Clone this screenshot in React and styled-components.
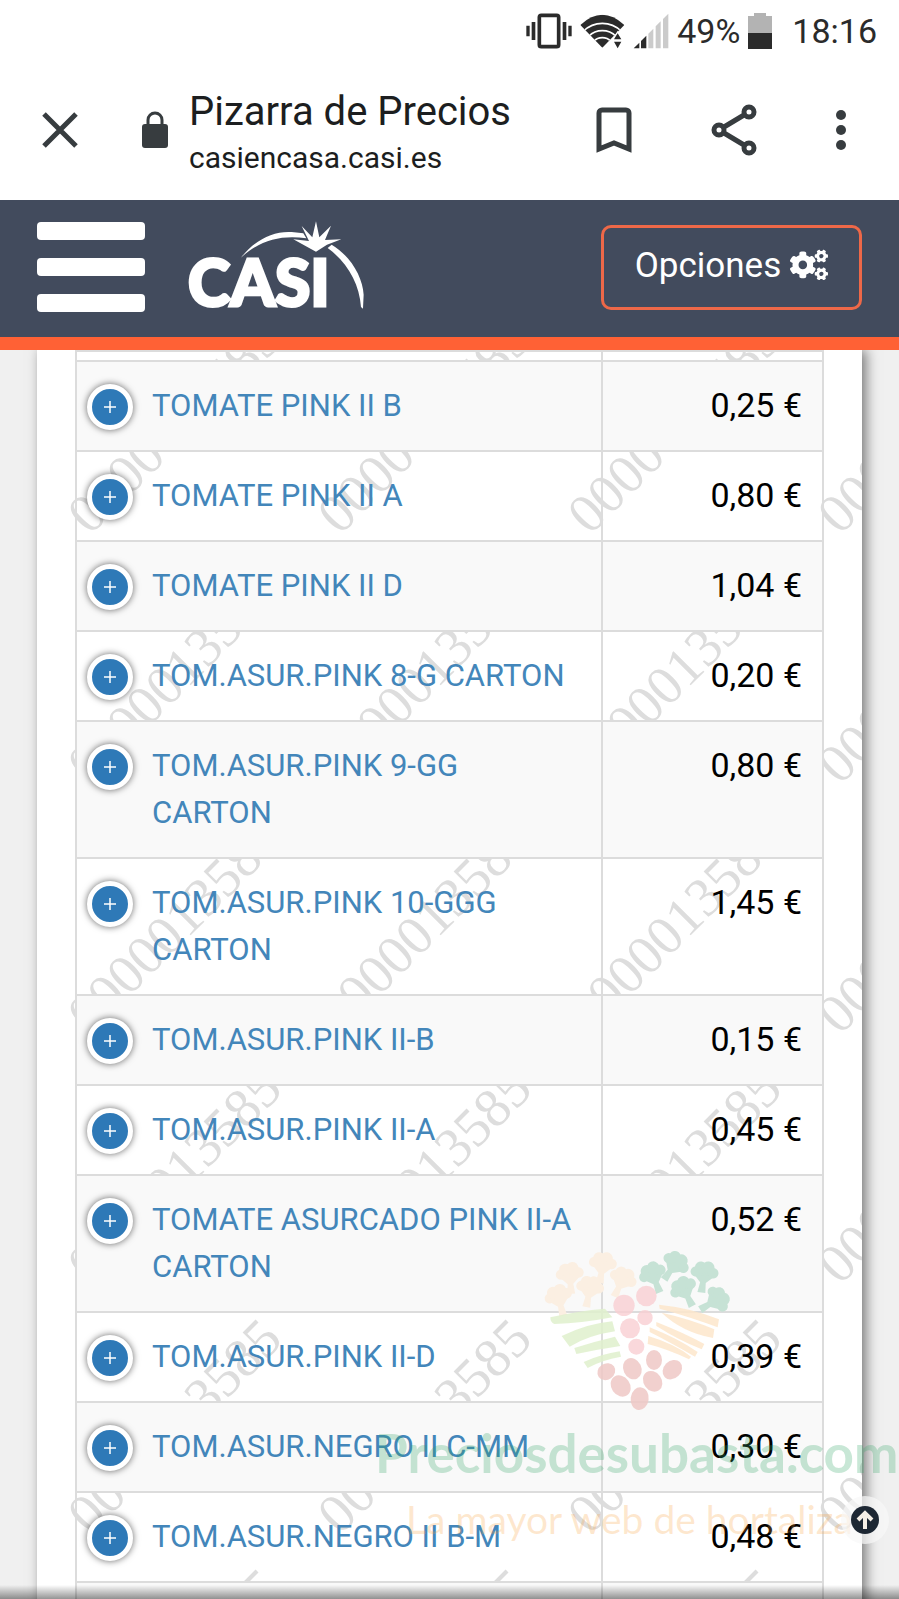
import React from 'react';
import styled, { createGlobalStyle } from 'styled-components';
import { FaCogs } from 'react-icons/fa';

const GlobalStyle = createGlobalStyle`
  *, *::before, *::after {
    box-sizing: border-box;
  }
  body {
    margin: 0;
    background-color: #f0f0f0;
    font-family: Roboto, 'Liberation Sans', sans-serif;
    color: #000;
  }
`;

const Page = styled.div`
  position: relative;
  display: flex;
  flex-direction: column;
  height: 100vh;
  overflow: hidden;
`;

const StatusBar = styled.div`
  display: flex;
  justify-content: flex-end;
  align-items: center;
  height: 62px;
  padding: 0 22px;
  background-color: white;
  color: #2b2b2b;
  font-size: 34px;
  svg {
    display: block;
  }
`;
const StatusIcons = styled.div`
  display: flex;
  align-items: center;
  gap: 8px;
  margin-right: 20px;
`;

const BrowserBar = styled.div`
  display: flex;
  align-items: center;
  height: 138px;
  padding: 0 47px 2px 36px;
  background-color: white;
  color: #373c3f;
`;
const PlainButton = styled.button`
  display: flex;
  justify-content: center;
  align-items: center;
  width: ${props => (props.$narrow ? '22px' : '48px')};
  height: 60px;
  padding: 0;
  border: none;
  background: none;
  color: inherit;
  cursor: pointer;
`;
const LockHolder = styled.div`
  width: 28px;
  height: 38px;
  margin-left: 57px;
  svg {
    display: block;
  }
`;
const Address = styled.div`
  flex: 1;
  margin-left: 20px;
  padding-top: 8px;
  color: #1c1e20;
`;
const PageTitle = styled.div`
  font-size: 40px;
  line-height: 48px;
  white-space: nowrap;
`;
const PageUrl = styled.div`
  font-size: 30px;
  line-height: 44px;
`;
const Actions = styled.div`
  display: flex;
  gap: 72px;
`;

const NavBar = styled.header`
  display: flex;
  align-items: center;
  height: 150px;
  flex-shrink: 0;
  padding: 0 37px 3px;
  background-color: #424b5d;
  border-bottom: 13px solid #ff6135;
`;
const MenuButton = styled.button`
  display: flex;
  flex-direction: column;
  gap: 18px;
  width: 108px;
  padding: 0;
  border: none;
  background: none;
  cursor: pointer;
`;
const Bar = styled.span`
  height: 18px;
  border-radius: 4px;
  background-color: white;
`;
const Logo = styled.a`
  margin-left: 35px;
  margin-right: auto;
  svg {
    display: block;
  }
`;
const OptionsButton = styled.button`
  display: flex;
  align-items: center;
  justify-content: center;
  gap: 9px;
  width: 261px;
  height: 85px;
  padding: 0 0 4px;
  border: 3px solid #ee6848;
  border-radius: 10px;
  background: none;
  color: white;
  font-family: inherit;
  font-size: 35px;
  cursor: pointer;
`;

const Main = styled.main`
  position: relative;
  flex: 1;
  min-height: 0;
  overflow: hidden;
  padding: 0 37px;
  &::after {
    content: '';
    position: absolute;
    left: 0;
    right: 0;
    bottom: 0;
    height: 14px;
    background: linear-gradient(rgba(0, 0, 0, 0), rgba(0, 0, 0, 0.42));
  }
`;
const Panel = styled.section`
  position: relative;
  min-height: 100%;
  padding: 0 38px;
  background-color: white;
  box-shadow: 4px 0 12px rgba(0, 0, 0, 0.5);
`;
const Watermark = styled.svg`
  position: absolute;
  left: 0;
  top: 0;
  width: 100%;
  height: 100%;
`;

const Table = styled.table`
  position: relative;
  width: 100%;
  border-collapse: collapse;
`;
const Row = styled.tr`
  background-color: ${props => (props.$striped ? '#f9f9f9' : 'transparent')};
`;
const Cell = styled.td`
  padding: 20px 20px 21px 10px;
  border: 2px solid #dcdcdc;
  vertical-align: top;
  line-height: 47px;
`;
const PriceCell = styled(Cell)`
  width: 221px;
  text-align: right;
  font-size: 34px;
`;
const CutCell = styled.td`
  height: ${props => props.$height};
  padding: 0;
  border: 2px solid #dcdcdc;
`;
const Product = styled.div`
  display: flex;
  align-items: flex-start;
  gap: 19px;
`;
const ProductLink = styled.a`
  color: #4386ba;
  font-size: 31px;
  text-decoration: none;
`;
const ExpandButton = styled.button`
  flex-shrink: 0;
  display: flex;
  justify-content: center;
  align-items: center;
  width: 46px;
  height: 46px;
  margin: 2px 0 -2px;
  padding: 0;
  border: 5px solid white;
  border-radius: 50%;
  background-color: #2e79b7;
  box-shadow: 0 0 7px rgba(0, 0, 0, 0.6);
  cursor: pointer;
`;

const TopLink = styled.a`
  position: absolute;
  right: 10px;
  bottom: 55px;
  display: flex;
  justify-content: center;
  align-items: center;
  width: 48px;
  height: 48px;
  border-radius: 50%;
  background-color: rgba(248, 248, 248, 0.7);
`;

const Sponsor = styled.div`
  position: absolute;
  right: 0;
  bottom: 47px;
  width: 524px;
  overflow: hidden;
  font-family: Lato, sans-serif;
  line-height: 66px;
  white-space: nowrap;
  pointer-events: none;
  svg {
    display: block;
    margin-left: 160px;
  }
`;
const SponsorName = styled.div`
  color: rgba(50, 165, 105, 0.27);
  font-size: 53px;
  font-weight: 700;
`;
const SponsorLine = styled.div`
  padding-left: 31px;
  color: rgba(250, 160, 60, 0.25);
  font-size: 39px;
`;

const products = [
  ['TOMATE PINK II B', '0,25 €'],
  ['TOMATE PINK II A', '0,80 €'],
  ['TOMATE PINK II D', '1,04 €'],
  ['TOM.ASUR.PINK 8-G CARTON', '0,20 €'],
  ['TOM.ASUR.PINK 9-GG CARTON', '0,80 €'],
  ['TOM.ASUR.PINK 10-GGG CARTON', '1,45 €'],
  ['TOM.ASUR.PINK II-B', '0,15 €'],
  ['TOM.ASUR.PINK II-A', '0,45 €'],
  ['TOMATE ASURCADO PINK II-A CARTON', '0,52 €'],
  ['TOM.ASUR.PINK II-D', '0,39 €'],
  ['TOM.ASUR.NEGRO II C-MM', '0,30 €'],
  ['TOM.ASUR.NEGRO II B-M', '0,48 €'],
];

const VibrateIcon = () => (
  <svg width="46" height="36" viewBox="0 0 138 108" fill="#2b2b2b">
    <rect x="40" y="7" width="58" height="94" rx="6" fill="none" stroke="#2b2b2b" strokeWidth="11" />
    <path d="M1 38h10v32H1zM17 27h11v54H17zM110 27h11v54h-11zM127 38h10v32h-10z" />
  </svg>
);

const WifiIcon = () => (
  <svg width="45" height="35" viewBox="0 0 135 105">
    <defs>
      <clipPath id="fan">
        <path d="M67 101 L1 33 Q67 -28 133 33 Z" />
      </clipPath>
    </defs>
    <g clipPath="url(#fan)">
      <rect width="135" height="105" fill="#2b2b2b" />
      <g fill="none" stroke="white" strokeWidth="5">
        <circle cx="67" cy="108" r="80" />
        <circle cx="67" cy="108" r="58" />
        <circle cx="67" cy="108" r="37" />
      </g>
    </g>
    <path d="M113 50 L130 79 L113 108 L96 79 Z" fill="white" />
    <path d="M113 58 L124 76 H102 Z M113 103 L102 83 H124 Z" fill="#2b2b2b" />
  </svg>
);

const SignalIcon = () => (
  <svg width="36" height="36" viewBox="0 0 108 108">
    <path d="M2 106 L19 89 V106 Z M24 84 L40 68 V106 H24 Z" fill="#2b2b2b" />
    <path d="M46 62 L61 47 V106 H46 Z M68 40 L83 25 V106 H68 Z M90 18 L106 2 V106 H90 Z" fill="#cbcbcb" />
  </svg>
);

const BatteryIcon = () => (
  <svg width="24" height="36" viewBox="0 0 24 36">
    <path d="M6 0h12v3h6v17H0V3h6z" fill="#b3b3b3" />
    <path d="M0 20h24v16H0z" fill="#2b2b2b" />
  </svg>
);

const CloseIcon = () => (
  <svg width="36" height="36" viewBox="0 0 36 36" stroke="currentColor" strokeWidth="5">
    <path d="M2 2 L34 34 M34 2 L2 34" />
  </svg>
);

const LockIcon = () => (
  <svg width="28" height="38" viewBox="0 0 28 38">
    <rect x="1" y="13" width="26" height="24" rx="3" fill="#373c3f" />
    <path d="M7 14 V9 a7 7 0 0 1 14 0 V14" fill="none" stroke="#373c3f" strokeWidth="3" />
  </svg>
);

const BookmarkIcon = () => (
  <svg width="36" height="46" viewBox="0 0 36 46" fill="none" stroke="currentColor" strokeWidth="5">
    <path d="M3 42 V6 a3 3 0 0 1 3 -3 H30 a3 3 0 0 1 3 3 V42 L18 36 Z" />
  </svg>
);

const ShareIcon = () => (
  <svg width="46" height="52" viewBox="0 0 46 52" fill="none" stroke="currentColor" strokeWidth="5">
    <path d="M8 26 L38 8 M8 26 L38 44" />
    <g fill="white">
      <circle cx="8" cy="26" r="5" />
      <circle cx="38" cy="8" r="5" />
      <circle cx="38" cy="44" r="5" />
    </g>
  </svg>
);

const DotsIcon = () => (
  <svg width="12" height="42" viewBox="0 0 12 42" fill="currentColor">
    <circle cx="6" cy="6" r="5" />
    <circle cx="6" cy="21" r="5" />
    <circle cx="6" cy="36" r="5" />
  </svg>
);

const CasiLogo = () => (
  <svg width="195" height="110" viewBox="0 0 195 110" fill="white">
    <text
      x="8"
      y="94"
      fontFamily="Lato, sans-serif"
      fontWeight="900"
      fontSize="64"
      stroke="white"
      strokeWidth="3">
      CASI
    </text>
    <g transform="scale(0.3333)">
      <path d="M183 137 C222 85 280 56 335 60 L370 64 L379 79 C305 68 240 84 183 137 Z" />
      <path d="M340 82 L387 87 L365 42 L397 76 L408 28 L418 76 L453 41 L435 84 L484 82 L441 98 L408 119 Z" />
      <path d="M455 98 C512 132 548 195 551 248 L549 290 L543 285 C538 212 500 150 443 108 Z" />
    </g>
  </svg>
);

const Broccoli = ({ x, y, turn }) => (
  <g transform={`translate(${x} ${y}) rotate(${turn})`}>
    <ellipse cx="0" cy="2" rx="34" ry="20" />
    <circle cx="-26" cy="4" r="15" />
    <circle cx="-12" cy="-10" r="18" />
    <circle cx="10" cy="-12" r="19" />
    <circle cx="27" cy="2" r="16" />
    <path d="M-30 12 L-8 34 L-12 64 H12 L9 34 L32 12 Z" />
  </g>
);

const HeartArt = () => (
  <svg width="205" height="180" viewBox="0 0 615 540">
    <g fill="#fbefe2">
      <Broccoli x="203" y="66" turn="8" />
      <Broccoli x="103" y="98" turn="-5" />
      <Broccoli x="265" y="112" turn="25" />
      <Broccoli x="165" y="138" turn="10" />
      <Broccoli x="68" y="165" turn="-15" />
    </g>
    <g fill="#c6e2d5">
      <Broccoli x="350" y="98" turn="-22" />
      <Broccoli x="424" y="66" turn="35" />
      <Broccoli x="508" y="94" turn="8" />
      <Broccoli x="442" y="142" turn="-28" />
      <Broccoli x="550" y="175" turn="58" />
    </g>
    <g fill="#dff0cc" fillOpacity="0.85">
      <path d="M46 232 Q130 212 210 206 L232 232 Q140 250 58 252 Q46 248 46 232 Z" />
      <path d="M80 288 Q160 250 232 244 L240 274 Q160 286 104 320 Z" />
      <path d="M118 324 Q180 304 240 290 L256 318 Q190 328 124 342 Z" />
      <path d="M146 366 Q200 342 254 334 L258 350 Q200 360 158 384 Z" />
    </g>
    <g fill="#fde6cb" fillOpacity="0.85">
      <path d="M372 194 Q470 204 552 238 L548 262 Q470 232 374 206 Z" />
      <path d="M380 218 Q470 238 538 268 L534 294 Q440 276 380 218 Z" />
      <path d="M364 246 Q450 280 508 312 L500 328 Q430 300 364 258 Z" />
      <path d="M344 262 Q430 296 488 336 L480 350 Q400 304 344 276 Z" />
      <path d="M340 288 Q420 312 468 350 L462 358 Q400 328 338 312 Z" />
    </g>
    <g fill="#f9ced2" fillOpacity="0.8">
      <circle cx="334" cy="168" r="31" />
      <circle cx="267" cy="196" r="32" />
      <circle cx="330" cy="233" r="23" />
      <circle cx="285" cy="265" r="30" />
      <circle cx="304" cy="320" r="24" />
    </g>
    <g fill="#efc8c6" fillOpacity="0.85">
      <ellipse cx="357" cy="360" rx="24" ry="30" />
      <ellipse cx="292" cy="386" rx="27" ry="33" transform="rotate(-25 292 386)" />
      <ellipse cx="214" cy="395" rx="28" ry="24" transform="rotate(-35 214 395)" />
      <ellipse cx="412" cy="389" rx="32" ry="26" transform="rotate(-45 412 389)" />
      <ellipse cx="257" cy="438" rx="28" ry="34" transform="rotate(-35 257 438)" />
      <ellipse cx="353" cy="424" rx="27" ry="33" transform="rotate(-35 353 424)" />
      <ellipse cx="314" cy="476" rx="27" ry="34" transform="rotate(8 314 476)" />
    </g>
  </svg>
);

const PlusIcon = () => (
  <svg width="14" height="14" viewBox="0 0 14 14" stroke="white" strokeWidth="1.5">
    <path d="M7 1 V13 M1 7 H13" />
  </svg>
);

const TopIcon = () => (
  <svg width="28" height="28" viewBox="0 0 28 28">
    <circle cx="14" cy="14" r="14" fill="#1d2733" />
    <path
      d="M14 23 V8 M7 14 L14 7 L21 14"
      fill="none"
      stroke="#f6efe6"
      strokeWidth="4"
    />
  </svg>
);

export default function App() {
  return (
    <Page>
      <GlobalStyle />
      <StatusBar>
        <StatusIcons>
          <VibrateIcon />
          <WifiIcon />
          <SignalIcon />
          <span>49%</span>
          <BatteryIcon />
        </StatusIcons>
        <span>18:16</span>
      </StatusBar>
      <BrowserBar>
        <PlainButton aria-label="Cerrar">
          <CloseIcon />
        </PlainButton>
        <LockHolder>
          <LockIcon />
        </LockHolder>
        <Address>
          <PageTitle>Pizarra de Precios</PageTitle>
          <PageUrl>casiencasa.casi.es</PageUrl>
        </Address>
        <Actions>
          <PlainButton aria-label="Guardar">
            <BookmarkIcon />
          </PlainButton>
          <PlainButton aria-label="Compartir">
            <ShareIcon />
          </PlainButton>
          <PlainButton $narrow aria-label="Más">
            <DotsIcon />
          </PlainButton>
        </Actions>
      </BrowserBar>
      <NavBar>
        <MenuButton aria-label="Menú">
          <Bar />
          <Bar />
          <Bar />
        </MenuButton>
        <Logo href="#inicio">
          <CasiLogo />
        </Logo>
        <OptionsButton>
          Opciones <FaCogs size={38} />
        </OptionsButton>
      </NavBar>
      <Main>
        <Panel>
          <Watermark aria-hidden="true">
            <defs>
              <pattern
                id="serial"
                width="250"
                height="250"
                patternUnits="userSpaceOnUse"
                patternTransform="translate(20 -50)">
                <text
                  transform="translate(33 236) rotate(-45)"
                  fontFamily="'Liberation Serif', serif"
                  fontSize="55"
                  fill="#dddddd">
                  0000013585
                </text>
              </pattern>
            </defs>
            <rect width="100%" height="100%" fill="url(#serial)" />
          </Watermark>
          <Table>
            <tbody>
              <Row>
                <CutCell $height="10px" />
                <CutCell $height="10px" />
              </Row>
              {products.map(([name, price], index) => (
                <Row key={name} $striped={index % 2 === 0}>
                  <Cell>
                    <Product>
                      <ExpandButton aria-label={`Ver ${name}`}>
                        <PlusIcon />
                      </ExpandButton>
                      <ProductLink href="#producto">{name}</ProductLink>
                    </Product>
                  </Cell>
                  <PriceCell>{price}</PriceCell>
                </Row>
              ))}
              <Row $striped>
                <CutCell $height="60px" />
                <CutCell $height="60px" />
              </Row>
            </tbody>
          </Table>
        </Panel>
      </Main>
      <Sponsor>
        <HeartArt />
        <SponsorName>Preciosdesubasta.com</SponsorName>
        <SponsorLine>La mayor web de hortaliza</SponsorLine>
      </Sponsor>
      <TopLink href="#inicio" aria-label="Subir">
        <TopIcon />
      </TopLink>
    </Page>
  );
}
